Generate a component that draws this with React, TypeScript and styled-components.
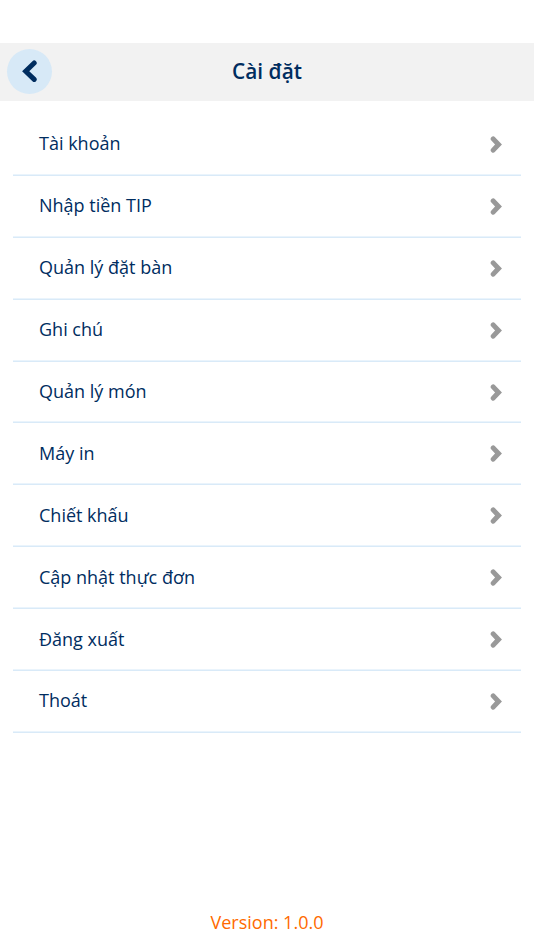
import React from "react";
import styled, { createGlobalStyle } from "styled-components";

const GlobalStyle = createGlobalStyle`
  * { box-sizing: border-box; }
  body { margin: 0; background: #fff; font-family: "Open Sans", sans-serif; color: #002d5f; }
`;
const Screen = styled.div`
  height: 950px;
  padding-top: 43px;
  display: flex;
  flex-direction: column;
`;
const Header = styled.header`
  height: 57.5px;
  padding: 0 7px;
  display: grid;
  grid-template-columns: 45px 1fr 45px;
  align-items: center;
  background: #f2f2f2;
`;
const BackButton = styled.button`
  width: 45px;
  height: 45px;
  padding: 0;
  border: 0;
  border-radius: 50%;
  background: #d7e9f7;
  display: flex;
  align-items: center;
  justify-content: center;
`;
const Title = styled.h1`
  margin: 0;
  padding-bottom: 2px;
  text-align: center;
  font-size: 20.8px;
  line-height: 28px;
  font-weight: 600;
`;
const Menu = styled.ul`
  margin: 13.5px 13px 0;
  padding: 0;
  list-style: none;
`;
const Item = styled.li`
  height: 61.9px;
  padding: 0 18.5px 0 26px;
  display: flex;
  align-items: center;
  justify-content: space-between;
  border-bottom: 1px solid #d9eaf8;
  box-shadow: inset 0 -1px #eaf4fc;
`;
const Label = styled.span`
  padding-bottom: 2px;
  font-size: 18px;
  line-height: 26px;
`;
const Version = styled.footer`
  margin-top: auto;
  padding-bottom: 15px;
  text-align: center;
  font-size: 18px;
  line-height: 26px;
  color: #ff6a00;
`;

const items = ["Tài khoản", "Nhập tiền TIP", "Quản lý đặt bàn", "Ghi chú", "Quản lý món", "Máy in", "Chiết khấu", "Cập nhật thực đơn", "Đăng xuất", "Thoát"];

export default function App() {
  return (
    <Screen>
      <GlobalStyle />
      <Header>
        <BackButton aria-label="Back">
          <svg width="16" height="24" viewBox="0 0 16 24"><path d="M12.200 3 3.700 11.200l8.500 8.200" fill="none" stroke="#002d5f" strokeWidth="5" strokeLinecap="round" /></svg>
        </BackButton>
        <Title>Cài đặt</Title>
      </Header>
      <Menu>
        {items.map((label) => (
          <Item key={label}>
            <Label>{label}</Label>
            <svg width="13" height="17" viewBox="0 0 13 17"><path d="m3.200 2.900 5.300 5.600-5.300 5.600" fill="none" stroke="#999" strokeWidth="5" strokeLinecap="round" /></svg>
          </Item>
        ))}
      </Menu>
      <Version>Version: 1.0.0</Version>
    </Screen>
  );
}
